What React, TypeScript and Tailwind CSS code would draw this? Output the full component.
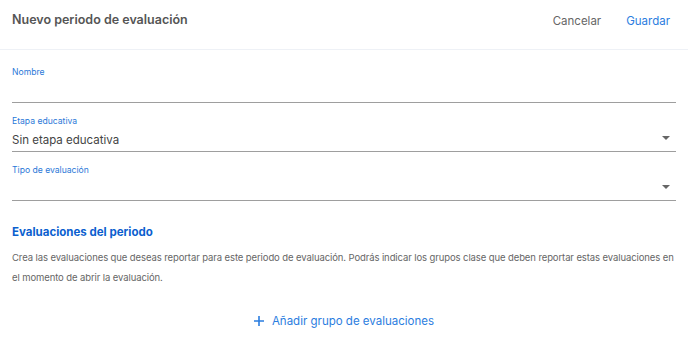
import React from 'react';

function Caret() {
  return (
    <svg width="8" height="4" viewBox="0 0 8 4" className="shrink-0 mb-[8px]">
      <path d="M0 0h8L4 4z" fill="#666" />
    </svg>
  );
}

function Field({ label, value, select }: { label: string; value?: string; select?: boolean }) {
  return (
    <div className="flex flex-col">
      <label className="text-[8.6px] leading-[12px] text-[#2b78d8]">{label}</label>
      <div className="flex items-end h-[25px] border-b border-[#9e9e9e] pr-[6px] pb-[3px]">
        <span className="flex-1 text-[11.5px] leading-[16px] text-[#444]">{value}</span>
        {select && <Caret />}
      </div>
    </div>
  );
}

export default function App() {
  return (
    <div
      className="w-[688px] h-[345px] bg-white overflow-hidden"
      style={{ fontFamily: 'Inter, "Noto Sans", sans-serif' }}
    >
      <header className="h-[50px] flex items-center justify-between pl-3 pr-[18px] border-b border-[#eef1f6]">
        <h1 className="text-[12.5px] font-semibold text-[#555] -mt-[8px]">Nuevo periodo de evaluación</h1>
        <div className="flex gap-[25px] text-[11.5px] -mt-[5px]">
          <button className="text-[#666]">Cancelar</button>
          <button className="text-[#2b7de0]">Guardar</button>
        </div>
      </header>

      <div className="px-3 pt-[16px] flex flex-col">
        <div className="flex flex-col gap-[12px]">
          <Field label="Nombre" />
          <Field label="Etapa educativa" value="Sin etapa educativa" select />
          <Field label="Tipo de evaluación" select />
        </div>

        <h2 className="mt-[23px] text-[11.5px] leading-[16px] font-bold text-[#0b5fcf]">Evaluaciones del periodo</h2>
        <p className="mt-[8px] text-[9.5px] leading-[19.5px] tracking-[-0.1px] text-[#666]">
          Crea las evaluaciones que deseas reportar para este periodo de evaluación. Podrás indicar los grupos clase que deben reportar estas evaluaciones en el momento de abrir la evaluación.
        </p>

        <div className="flex justify-center mt-[26px]">
          <button className="flex items-center gap-[8px] text-[11.5px] leading-[16px] text-[#2b7de0]">
            <svg width="10" height="10" viewBox="0 0 10 10">
              <path d="M5 0v10M0 5h10" stroke="#2b7de0" strokeWidth="1.6" />
            </svg>
            Añadir grupo de evaluaciones
          </button>
        </div>
      </div>
    </div>
  );
}
